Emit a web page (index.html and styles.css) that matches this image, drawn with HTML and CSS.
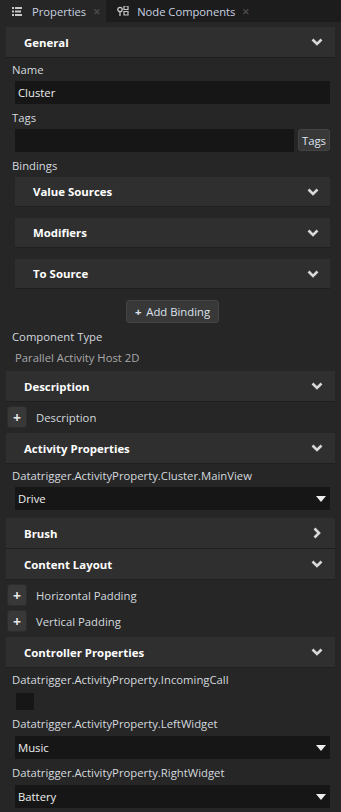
FILE: index.html
```html
<!DOCTYPE html>
<html lang="en">
<head>
    <meta charset="UTF-8">
    <title>Properties</title>
    <link rel="stylesheet" href="styles.css">
</head>
<body>
    <div class="tabs">
        <div class="tab active">
            <svg class="tab-icon" width="10" height="9" viewBox="0 0 10 9"><path d="M0 0h2v2H0zM3 0h7v2H3zM0 3.5h2v2H0zM3 3.5h6v2H3zM0 7h2v2H0zM3 7h7v2H3z" fill="#c8c8c8"/></svg>
            <span>Properties</span>
            <span class="close">&#x2715;</span>
        </div>
        <div class="tab">
            <svg class="tab-icon" width="12" height="10" viewBox="0 0 12 10"><circle cx="3" cy="3.5" r="2.2" fill="none" stroke="#c8c8c8" stroke-width="1.3"/><path d="M3 6v4" stroke="#c8c8c8" stroke-width="1.3"/><path d="M7 0h4v3.5H7zM7 5.5h4V9H7z" fill="none" stroke="#c8c8c8" stroke-width="1.2"/></svg>
            <span>Node Components</span>
            <span class="close">&#x2715;</span>
        </div>
    </div>

    <div class="panel">
        <div class="section-head">
            <span>General</span>
            <svg class="chev" viewBox="0 0 12 8"><path d="M1.5 1.5L6 6l4.5-4.5" /></svg>
        </div>
        <div class="field">
            <div class="label">Name</div>
            <div class="input">Cluster</div>
        </div>
        <div class="field">
            <div class="label">Tags</div>
            <div class="input-row">
                <div class="input"></div>
                <div class="btn">Tags</div>
            </div>
        </div>
        <div class="field">
            <div class="label">Bindings</div>
            <div class="sub-list">
                <div class="sub-head"><span>Value Sources</span><svg class="chev" viewBox="0 0 12 8"><path d="M1.5 1.5L6 6l4.5-4.5" /></svg></div>
                <div class="sub-head"><span>Modifiers</span><svg class="chev" viewBox="0 0 12 8"><path d="M1.5 1.5L6 6l4.5-4.5" /></svg></div>
                <div class="sub-head"><span>To Source</span><svg class="chev" viewBox="0 0 12 8"><path d="M1.5 1.5L6 6l4.5-4.5" /></svg></div>
                <div class="center">
                    <div class="btn add-binding"><span class="plus">+</span> Add Binding</div>
                </div>
            </div>
        </div>
        <div class="field type-field">
            <div class="label">Component Type</div>
            <div class="value">Parallel Activity Host 2D</div>
        </div>

        <div class="section-head">
            <span>Description</span>
            <svg class="chev" viewBox="0 0 12 8"><path d="M1.5 1.5L6 6l4.5-4.5" /></svg>
        </div>
        <div class="add-row last"><div class="add-btn">+</div><span>Description</span></div>

        <div class="section-head">
            <span>Activity Properties</span>
            <svg class="chev" viewBox="0 0 12 8"><path d="M1.5 1.5L6 6l4.5-4.5" /></svg>
        </div>
        <div class="field last">
            <div class="label">Datatrigger.ActivityProperty.Cluster.MainView</div>
            <div class="input select">Drive<span class="caret"></span></div>
        </div>

        <div class="section-head">
            <span>Brush</span>
            <svg class="chev-right" viewBox="0 0 8 12"><path d="M1.5 1.5L6 6l-4.5 4.5" /></svg>
        </div>
        <div class="section-head">
            <span>Content Layout</span>
            <svg class="chev" viewBox="0 0 12 8"><path d="M1.5 1.5L6 6l4.5-4.5" /></svg>
        </div>
        <div class="add-row"><div class="add-btn">+</div><span>Horizontal Padding</span></div>
        <div class="add-row last"><div class="add-btn">+</div><span>Vertical Padding</span></div>

        <div class="section-head">
            <span>Controller Properties</span>
            <svg class="chev" viewBox="0 0 12 8"><path d="M1.5 1.5L6 6l4.5-4.5" /></svg>
        </div>
        <div class="field">
            <div class="label">Datatrigger.ActivityProperty.IncomingCall</div>
            <div class="checkbox"></div>
        </div>
        <div class="field wide">
            <div class="label">Datatrigger.ActivityProperty.LeftWidget</div>
            <div class="input select">Music<span class="caret"></span></div>
        </div>
        <div class="field wide">
            <div class="label">Datatrigger.ActivityProperty.RightWidget</div>
            <div class="input select">Battery<span class="caret"></span></div>
        </div>
    </div>
</body>
</html>
```

FILE: styles.css
```css
body {
    margin: 0;
    background: #262626;
    color: #d4d9df;
    font-family: "Open Sans", "Noto Sans", sans-serif;
    font-size: 11.3px;
    overflow: hidden;
}

/* tab strip */
.tabs {
    display: flex;
    height: 22px;
    background: #1c1c1c;
}

.tab {
    display: flex;
    align-items: center;
    padding: 0 5px 0 12px;
    color: #c9d2e0;
    font-size: 11.2px;
}

.tab.active {
    background: #262626;
}

.tab + .tab {
    padding-left: 11px;
}

.tab-icon {
    margin-right: 10px;
}

.tab + .tab .tab-icon {
    margin-right: 8px;
}

.close {
    margin-left: 7px;
    color: #4a4a4a;
    font-size: 9px;
    font-weight: bold;
}

/* main panel */
.panel {
    padding: 5px 6px 0 6px;
    display: flex;
    flex-direction: column;
}

.section-head,
.sub-head {
    display: flex;
    align-items: center;
    justify-content: space-between;
    flex: none;
    height: 31px;
    padding: 0 12px 0 18px;
    background: #2f2f2f;
    border-bottom: 1px solid #1f1f1f;
    box-sizing: border-box;
    color: #fff;
    font-weight: bold;
    font-size: 11.4px;
}

.chev {
    width: 12px;
    height: 8px;
    fill: none;
    stroke: #d8d8d8;
    stroke-width: 2.6;
}

.chev-right {
    width: 8px;
    height: 12px;
    margin-right: 2px;
    fill: none;
    stroke: #d8d8d8;
    stroke-width: 2.6;
}

.field {
    padding: 3px 5px 2px 6px;
    display: flex;
    flex-direction: column;
}

.field.last {
    padding-bottom: 8px;
}

.field.type-field {
    padding-bottom: 3px;
}

.label {
    height: 18px;
    line-height: 18px;
    margin-bottom: 2px;
}

.field.wide .label {
    margin-bottom: 3px;
}

.input {
    height: 23px;
    line-height: 23px;
    background: #161616;
    padding: 0 3px;
    color: #eee;
    margin-left: 3px;
}

.input-row {
    display: flex;
    gap: 4px;
}

.input-row .input {
    flex: 1;
}

.btn {
    background: #383838;
    border: 1px solid #444;
    border-radius: 3px;
    height: 23px;
    line-height: 21px;
    padding: 0 3px;
    box-sizing: border-box;
    color: #dde4ee;
}

.input-row .btn {
    height: 22px;
}

.sub-list {
    display: flex;
    flex-direction: column;
    gap: 11px;
    margin-left: 3px;
}

.sub-head {
    padding-right: 11px;
    height: 30px;
}

.add-binding {
    padding: 0 8px;
}

.center {
    display: flex;
    justify-content: center;
}

.plus {
    font-weight: bold;
    margin-right: 2px;
}

.value {
    color: #a8a8a8;
    margin-left: 3px;
    line-height: 20px;
}

.add-row {
    display: flex;
    align-items: center;
    gap: 9px;
    padding: 4px 1px 0;
}

.add-row.last {
    padding-bottom: 5px;
}

.add-btn {
    width: 20px;
    height: 22px;
    line-height: 21px;
    text-align: center;
    background: #383838;
    border: 1px solid #2c2c2c;
    border-radius: 3px;
    box-sizing: border-box;
    color: #e6e6e6;
    font-weight: bold;
    font-size: 14px;
}

.select {
    position: relative;
}

.caret {
    position: absolute;
    right: 4px;
    top: 9px;
    border-left: 5px solid transparent;
    border-right: 5px solid transparent;
    border-top: 6px solid #eee;
}

.checkbox {
    width: 18px;
    height: 17px;
    margin: 2px 0 0 4px;
    background: #161616;
}
```
